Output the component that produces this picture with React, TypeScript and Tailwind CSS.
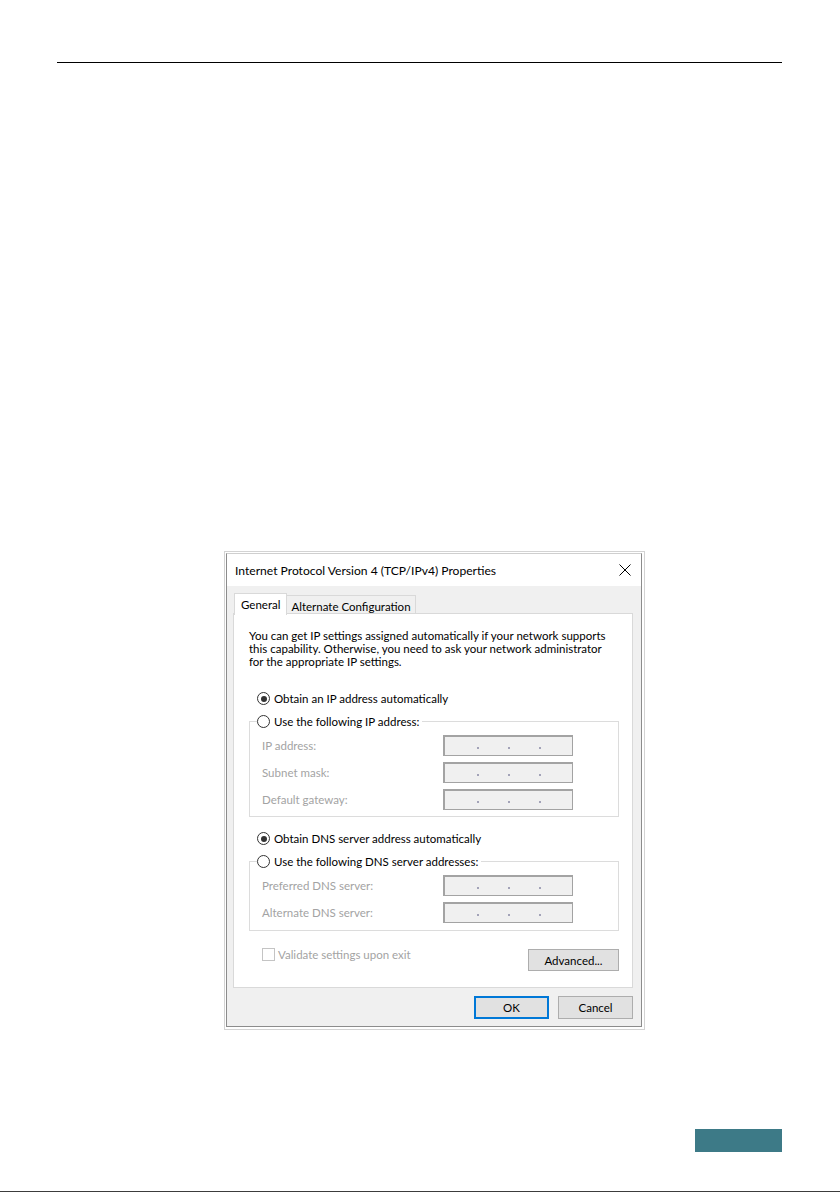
import React from 'react';

function Radio({ checked }: { checked?: boolean }) {
  return (
    <span className="flex h-[13px] w-[13px] shrink-0 items-center justify-center rounded-full border border-[#333333] bg-white">
      {checked && <span className="h-[6px] w-[6px] rounded-full bg-[#333333]" />}
    </span>
  );
}

function RadioRow({ label, checked }: { label: string; checked?: boolean }) {
  return (
    <div className="flex h-[17px] items-center gap-[4px] whitespace-nowrap">
      <Radio checked={checked} />
      <span>{label}</span>
    </div>
  );
}

function IpField() {
  return (
    <div className="flex h-[21px] w-[130px] items-end gap-[29px] border border-t-2 border-l-2 border-[#a3a3a3] bg-[#f0f0f0] pb-[6px] pl-[32px]">
      <span className="h-[2px] w-[2px] rounded-full bg-[#8a8aa6]" />
      <span className="h-[2px] w-[2px] rounded-full bg-[#8a8aa6]" />
      <span className="h-[2px] w-[2px] rounded-full bg-[#8a8aa6]" />
    </div>
  );
}

function FieldRow({ label }: { label: string }) {
  return (
    <div className="flex items-center">
      <span className="w-[181px] text-[#a3a3a3]">{label}</span>
      <IpField />
    </div>
  );
}

function GroupBox({ legend, fields, last }: { legend: string; fields: string[]; last?: boolean }) {
  return (
    <fieldset className={`w-[370px] border border-[#dcdcdc] ${last ? 'pb-[7px]' : 'pb-[6px]'}`}>
      <legend className="ml-[7px] pr-[3px]">
        <RadioRow label={legend} />
      </legend>
      <div className="flex flex-col gap-[6px] pl-[12px] pt-[5px]">
        {fields.map((f) => (
          <FieldRow key={f} label={f} />
        ))}
      </div>
    </fieldset>
  );
}

function Dialog() {
  return (
    <div className="flex h-[474px] w-[416px] flex-col border border-[#8c8c8c] border-t-[#cfcfcf] text-[11.5px] leading-[13px] text-black font-['Lato',sans-serif]">
      {/* title bar */}
      <div className="flex h-[32px] items-center justify-between bg-white pl-[8px] pr-[10px]">
        <span className="text-[12.1px]">Internet Protocol Version 4 (TCP/IPv4) Properties</span>
        <svg width="12" height="12" viewBox="0 0 12 12" className="text-black">
          <path d="M0.5 0.5 L11.5 11.5 M11.5 0.5 L0.5 11.5" stroke="currentColor" strokeWidth="1" fill="none" />
        </svg>
      </div>

      <div className="flex flex-1 flex-col bg-[#f0f0f0] pb-[7px] pl-[6px] pr-[8px] pt-[6px]">
        {/* tabs */}
        <div className="flex h-[22px] items-end pl-px">
          <div className="relative z-10 -mb-px flex h-[22px] items-center border border-b-0 border-[#d9d9d9] bg-white px-[6px]">
            General
          </div>
          <div className="flex h-[19px] items-center border border-b-0 border-l-0 border-[#d9d9d9] bg-[#f0f0f0] px-[4px] pt-[2px]">
            Alternate Configuration
          </div>
        </div>

        {/* panel */}
        <div className="-mt-px flex h-[375px] w-[400px] flex-col border border-[#d9d9d9] bg-white pl-[15px] pr-[13px] pt-[15px]">
          <p className="whitespace-nowrap">
            You can get IP settings assigned automatically if your network supports
            <br />
            this capability. Otherwise, you need to ask your network administrator
            <br />
            for the appropriate IP settings.
          </p>

          <div className="ml-[8px] mt-[22px]">
            <RadioRow label="Obtain an IP address automatically" checked />
          </div>
          <div className="mt-[6px]">
            <GroupBox
              legend="Use the following IP address:"
              fields={['IP address:', 'Subnet mask:', 'Default gateway:']}
            />
          </div>

          <div className="ml-[8px] mt-[13px]">
            <RadioRow label="Obtain DNS server address automatically" checked />
          </div>
          <div className="mt-[6px]">
            <GroupBox
              legend="Use the following DNS server addresses:"
              fields={['Preferred DNS server:', 'Alternate DNS server:']}
              last
            />
          </div>

          <div className="mt-[17px] flex w-[370px] items-start justify-between">
            <div className="ml-[13px] flex items-center gap-[3px]">
              <span className="h-[13px] w-[13px] border border-[#c4c4c4] bg-white" />
              <span className="text-[#a3a3a3]">Validate settings upon exit</span>
            </div>
            <button className="mt-px flex h-[22px] w-[91px] items-center justify-center border border-[#adadad] bg-[#e1e1e1]">
              Advanced...
            </button>
          </div>
        </div>

        {/* buttons */}
        <div className="mt-[8px] flex w-[400px] justify-end gap-[9px]">
          <button className="flex h-[23px] w-[75px] items-center justify-center border-2 border-[#0078d7] bg-[#e1e1e1]">
            OK
          </button>
          <button className="flex h-[23px] w-[75px] items-center justify-center border border-[#adadad] bg-[#e1e1e1]">
            Cancel
          </button>
        </div>
      </div>
    </div>
  );
}

export default function App() {
  return (
    <div className="flex h-[1192px] w-[840px] flex-col bg-white">
      <div className="ml-[57px] mt-[62px] h-px w-[725px] bg-black" />

      <div className="ml-[224px] mt-[488px] w-[421px] border border-[#d3d3d3] bg-white pb-[2px] pl-px pr-[2px] pt-px">
        <Dialog />
      </div>

      <div className="ml-[695px] mt-[99px] h-[23px] w-[87px] bg-[#3d7a87]" />

      <div className="mt-auto h-px w-full bg-[#3c3c3c]" />
    </div>
  );
}
